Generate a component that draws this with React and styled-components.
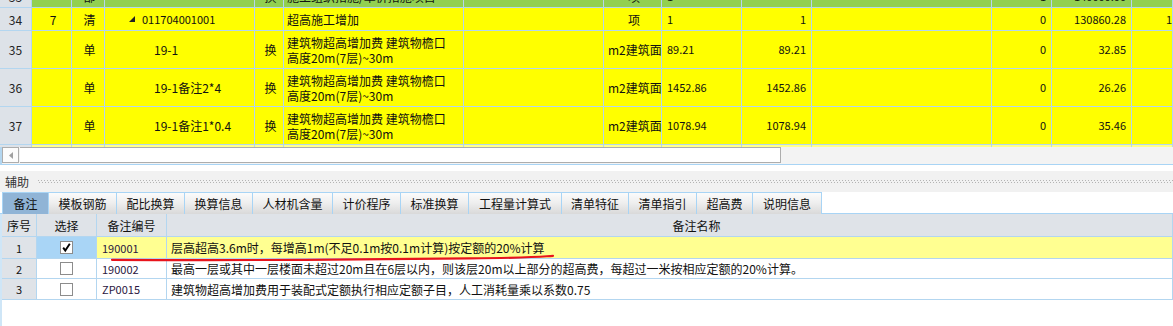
import React from "react";
import styled, { createGlobalStyle } from "styled-components";

const LINE = "#b3d6f0";
const COLS =
  "32px 40px 33px 150px 29px 180px 140px 58px 80px 70px 180px 60px 80px 41px";

const GlobalStyle = createGlobalStyle`
  html, body {
    margin: 0;
    padding: 0;
    background: #fff;
  }
  body {
    font-family: "Noto Sans CJK SC", "Noto Sans", sans-serif;
    font-size: 12px;
    color: #111;
  }
  * {
    box-sizing: border-box;
  }
`;

const Page = styled.div`
  position: relative;
  width: 1173px;
  height: 326px;
  overflow: hidden;
`;

/* ---------- top grid ---------- */

const Viewport = styled.div`
  height: 147px;
  overflow: hidden;
`;

const Grid = styled.div`
  margin-top: -15px;
`;

const Row = styled.div`
  display: grid;
  grid-template-columns: ${COLS};
  height: ${(p) => p.$h}px;
  background: ${(p) => p.$bg};
`;

const Cell = styled.div`
  display: flex;
  align-items: center;
  justify-content: ${(p) =>
    p.$align === "right" ? "flex-end" : p.$align === "center" ? "center" : "flex-start"};
  padding: ${(p) => (p.$align === "right" ? "0 5px 0 0" : `0 0 0 ${p.$pl ?? 3}px`)};
  border-right: 1px solid ${LINE};
  border-bottom: 1px solid ${LINE};
  white-space: nowrap;
  overflow: hidden;
  line-height: 15px;
  font-size: ${(p) => (p.$num ? "11px" : "12px")};
`;

const RowNo = styled(Cell)`
  background: #dde2e8;
  justify-content: center;
  padding: 0;
  color: #222;
`;

const Desc = styled.div`
  white-space: normal;
  line-height: 15px;
`;

const Tri = () => (
  <svg width="6" height="6" viewBox="0 0 6 6" style={{ marginRight: 7 }}>
    <polygon points="6,0 6,6 0,6" fill="#222" />
  </svg>
);

const ALIGN = [
  "center", "center", "center", "left", "center", "left", "left",
  "center", "left", "right", "left", "right", "right", "left",
];

const NUMCOL = [false, false, false, true, false, false, false, false, true, true, false, true, true, true];

const desc = (
  <Desc>
    建筑物超高增加费 建筑物檐口
    <br />
    高度20m(7层)~30m
  </Desc>
);

const topRows = [
  {
    h: 23,
    bg: "#92d050",
    cells: ["33", "", "部", "", "换", "施工组织措施/单价措施项目…", "", "项", "1", "", "", "1", "140000.00", ""],
  },
  {
    h: 23,
    bg: "#ffff00",
    cells: ["34", "7", "清", { tree: "011704001001" }, "", "超高施工增加", "", "项", "1", "1", "", "0", "130860.28", "1."],
  },
  {
    h: 38,
    bg: "#ffff00",
    cells: ["35", "", "单", { child: "19-1" }, "换", desc, "", { clip: "m2建筑面" }, "89.21", "89.21", "", "0", "32.85", ""],
  },
  {
    h: 38,
    bg: "#ffff00",
    cells: ["36", "", "单", { child: "19-1备注2*4" }, "换", desc, "", { clip: "m2建筑面" }, "1452.86", "1452.86", "", "0", "26.26", ""],
  },
  {
    h: 38,
    bg: "#ffff00",
    cells: ["37", "", "单", { child: "19-1备注1*0.4" }, "换", desc, "", { clip: "m2建筑面" }, "1078.94", "1078.94", "", "0", "35.46", ""],
  },
  {
    h: 23,
    bg: "#ffff8c",
    cells: ["38", "", "", "", "", "", "", "", "", "", "", "", "", ""],
  },
];

const renderCell = (c, i) => {
  if (i === 0) return <RowNo key={i}>{c}</RowNo>;
  if (c && c.tree)
    return (
      <Cell key={i} $align="left" $pl={24} $num>
        <Tri />
        {c.tree}
      </Cell>
    );
  if (c && c.child)
    return (
      <Cell key={i} $align="left" $pl={49}>
        {c.child}
      </Cell>
    );
  if (c && c.clip)
    return (
      <Cell key={i} $align="left" $pl={4}>
        {c.clip}
      </Cell>
    );
  return (
    <Cell
      key={i}
      $align={ALIGN[i]}
      $pl={i === 8 ? 5 : i === 13 ? 34 : 3}
      $num={NUMCOL[i]}
    >
      {c}
    </Cell>
  );
};

/* ---------- scrollbar ---------- */

const HScroll = styled.div`
  display: flex;
  height: 18px;
  padding-bottom: 1px;
  background: #f3f3f3;
  border-left: 2px solid ${LINE};
  border-bottom: 1px solid #a8d4f5;
`;

const ScrollBtn = styled.div`
  width: 17px;
  display: flex;
  align-items: center;
  justify-content: center;
  background: #fcfcfc;
  border: 1px solid #adadad;
`;

const Thumb = styled.div`
  width: 761px;
  background: #fff;
  border: 1px solid #adadad;
  border-left: none;
  margin-left: 1px;
`;

/* ---------- assistant panel ---------- */

const AuxHead = styled.div`
  display: flex;
  align-items: center;
  height: 21px;
  margin-top: 6px;
  background: #f1f1f1;
  padding-left: 5px;
`;

const AuxTitle = styled.span`
  color: #333;
  width: 33px;
`;

const Dots = styled.div`
  flex: 1;
  height: 3px;
  margin-top: -1px;
  background-image: repeating-linear-gradient(90deg, #b4b4b4 0 1px, transparent 1px 3px),
    repeating-linear-gradient(90deg, transparent 0 1.5px, #b4b4b4 1.5px 2.5px, transparent 2.5px 3px);
  background-size: 100% 1px, 100% 1px;
  background-position: 0 0, 0 2px;
  background-repeat: no-repeat;
`;

const Tabs = styled.div`
  display: flex;
  height: 22px;
  padding-left: 2px;
  background: #fff;
  border-bottom: 1px solid #a8d4f5;
`;

const Tab = styled.div`
  width: ${(p) => p.$w + 1}px;
  margin-left: ${(p) => (p.$first ? 0 : -1)}px;
  height: 22px;
  display: flex;
  align-items: center;
  justify-content: center;
  border: 1px solid #a8d4f5;
  border-bottom: none;
  color: #111;
  background: ${(p) =>
    p.$active ? "#90b4d6" : "linear-gradient(#fbfbfb, #efefef 45%, #d9d9d9)"};
`;

const NoteTable = styled.div`
  border-left: 2px solid #cfe6f7;
  height: 200px;
`;

const NoteRow = styled.div`
  display: grid;
  grid-template-columns: 35px 60px 70px 1fr;
  height: ${(p) => p.$h}px;
  background: ${(p) => p.$bg || "#fff"};
`;

const NCell = styled.div`
  display: flex;
  align-items: center;
  justify-content: ${(p) => (p.$center ? "center" : "flex-start")};
  padding-left: ${(p) => p.$pl || 0}px;
  border-right: 1px solid ${LINE};
  border-bottom: 1px solid ${LINE};
  background: ${(p) => p.$bg || "transparent"};
  white-space: nowrap;
  overflow: hidden;
  font-size: ${(p) => (p.$num ? "11px" : "12px")};
  color: ${(p) => p.$color || "#111"};
`;

const Box = styled.div`
  width: 13px;
  height: 13px;
  border: 1px solid #8c8c8c;
  background: #fff;
  display: flex;
  align-items: center;
  justify-content: center;
`;

const Check = ({ on }) => (
  <Box>
    {on && (
      <svg width="11" height="11" viewBox="0 0 11 11">
        <path d="M2.2 5.6 L4.3 8.6 L8.8 1.8" stroke="#000" strokeWidth="1.9" fill="none" />
      </svg>
    )}
  </Box>
);

const Mark = styled.svg`
  position: absolute;
  left: 0;
  top: 0;
  pointer-events: none;
`;

const tabs = [
  ["备注", 46], ["模板钢筋", 68], ["配比换算", 68], ["换算信息", 68],
  ["人材机含量", 80], ["计价程序", 68], ["标准换算", 68], ["工程量计算式", 93],
  ["清单特征", 67], ["清单指引", 68], ["超高费", 56], ["说明信息", 69],
];

const notes = [
  {
    h: 22,
    code: "190001",
    on: true,
    name: "层高超高3.6m时，每增高1m(不足0.1m按0.1m计算)按定额的20%计算",
  },
  {
    h: 20,
    code: "190002",
    on: false,
    name: "最高一层或其中一层楼面未超过20m且在6层以内，则该层20m以上部分的超高费，每超过一米按相应定额的20%计算。",
  },
  {
    h: 21,
    code: "ZP0015",
    on: false,
    name: "建筑物超高增加费用于装配式定额执行相应定额子目，人工消耗量乘以系数0.75",
  },
];

export default function App() {
  return (
    <Page>
      <GlobalStyle />
      <Viewport>
        <Grid>
          {topRows.map((r, idx) => (
            <Row key={idx} $h={r.h} $bg={r.bg}>
              {r.cells.map(renderCell)}
            </Row>
          ))}
        </Grid>
      </Viewport>
      <HScroll>
        <ScrollBtn>
          <svg width="4" height="7" viewBox="0 0 4 7">
            <polygon points="4,0 4,7 0,3.5" fill="#a0a0a0" />
          </svg>
        </ScrollBtn>
        <Thumb />
      </HScroll>

      <AuxHead>
        <AuxTitle>辅助</AuxTitle>
        <Dots />
      </AuxHead>
      <Tabs>
        {tabs.map(([t, w], i) => (
          <Tab key={t} $w={w} $first={i === 0} $active={i === 0}>
            {t}
          </Tab>
        ))}
      </Tabs>
      <NoteTable>
        <NoteRow $h={23} $bg="#dfe3e8">
          <NCell $center>序号</NCell>
          <NCell $center>选择</NCell>
          <NCell $center>备注编号</NCell>
          <NCell $center $pl={54}>备注名称</NCell>
        </NoteRow>
        {notes.map((n, i) => (
          <NoteRow key={n.code} $h={n.h} $bg={n.on ? "#ffff91" : "#fff"}>
            <NCell $center $bg="#dfe3e8" $num>
              {i + 1}
            </NCell>
            <NCell $center $bg={n.on ? "#a9d5f6" : "#fff"}>
              <Check on={n.on} />
            </NCell>
            <NCell $pl={5} $num $color="#2a1640">
              {n.code}
            </NCell>
            <NCell $pl={4}>{n.name}</NCell>
          </NoteRow>
        ))}
      </NoteTable>

      <Mark width="1173" height="326">
        <path
          d="M112 259.8 C 250 260.6, 400 259.2, 470 258.4 S 540 256.6, 553 255.8"
          stroke="#e8141c"
          strokeWidth="2.2"
          strokeLinecap="round"
          fill="none"
        />
      </Mark>
    </Page>
  );
}
